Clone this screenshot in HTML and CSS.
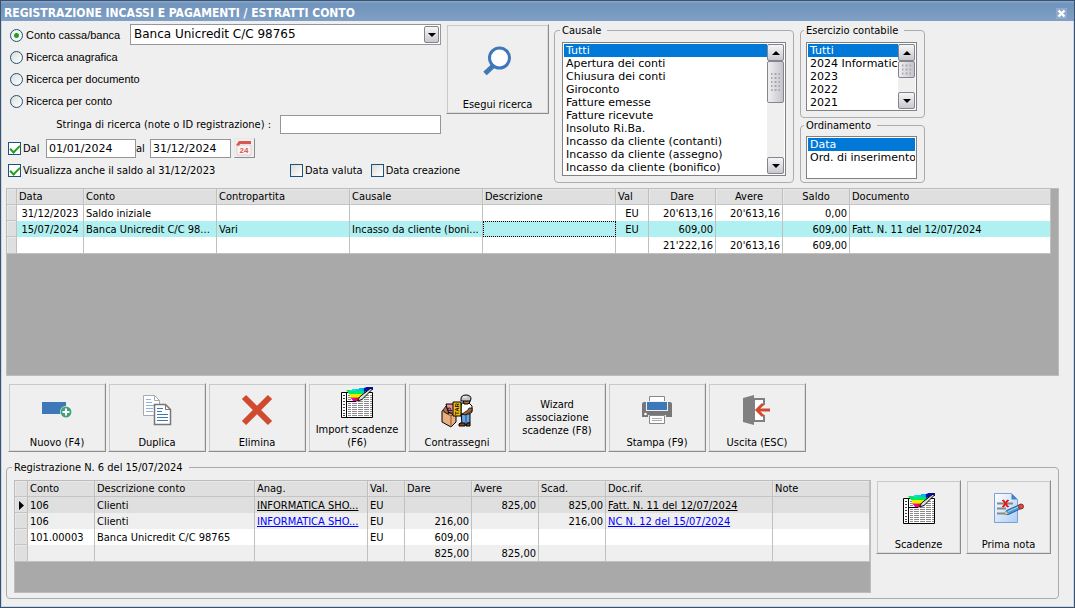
FILE: index.html
```html
<!DOCTYPE html>
<html lang="it">
<head>
  <meta charset="UTF-8">
  <meta name="viewport" content="width=device-width, initial-scale=1.0">
  <title>Registrazione incassi e pagamenti</title>
  <link rel="stylesheet" href="styles.css">
</head>
<body>
<div class="window">
  <header class="titlebar">
    <h1>REGISTRAZIONE INCASSI E PAGAMENTI / ESTRATTI CONTO</h1>
    <button type="button" class="close" aria-label="Chiudi">
      <svg width="11" height="11" viewBox="0 0 11 11"><path d="M2.5 2.5l6 6M8.5 2.5l-6 6" stroke="#fff" stroke-width="2.4"/></svg>
    </button>
  </header>

  <!-- icons used more than once -->
  <svg class="defs" width="0" height="0">
    <defs>
      <linearGradient id="pen" x1="0" x2="1"><stop offset="0" stop-color="#00e040"/><stop offset=".3" stop-color="#00e8e8"/><stop offset=".7" stop-color="#00b0f0"/><stop offset="1" stop-color="#0010a0"/></linearGradient>
    </defs>
    <symbol id="i-sheet" viewBox="0 0 34 34">
      <path d="M1.500 6.500h31v25h-31z" fill="#fff" stroke="#000"/>
      <path d="M3 9.500h2M3 12.500h2M3 15.500h2M3 18.500h2M3 21.500h2M3 24.500h2M3 27.500h2M3 29.500h2" stroke="#444"/>
      <path d="M6.500 7v24" stroke="#000"/>
      <path d="M8 9.500h24M8 11.500h24M8 13.500h24M8 15.500h24M8 17.500h24M8 19.500h24M8 21.500h24M8 23.500h24M8 25.500h24M8 27.500h24M8 29.500h24" stroke="#8a8a8a"/>
      <path d="M11.500 7v24M17.500 7v24M23.500 7v24M29.500 7v24" stroke="#fff"/>
      <path d="M6 4h6V3h7V2h7V1h4l-5 5H8z" fill="url(#pen)"/>
      <path d="M7 5h19l-3 3H9z" fill="#00e860"/>
      <path d="M9 8h14l-3 3H11z" fill="#e8f000"/>
      <path d="M10 11h9l-2 2h-6z" fill="#ff9000"/>
      <path d="M11 12h5v3h-3z" fill="#e000e0"/>
      <path d="M15 12h4l-2 3h-2z" fill="#f01020"/>
      <path d="M6 15.500h10" stroke="#000"/>
      <path d="M24 2l3-1h6v3h-4l-5 2z" fill="#0010b0"/>
      <path d="M17.500 15l2-4L31 2l1.500 1L22 13.500z" fill="#ddd" stroke="#000"/>
    </symbol>
  </svg>

  <form class="search">
    <div class="filters">
      <div class="filter-top">
        <div class="radios">
          <label><input type="radio" name="tipo" checked>Conto cassa/banca</label>
          <label><input type="radio" name="tipo">Ricerca anagrafica</label>
          <label><input type="radio" name="tipo">Ricerca per documento</label>
          <label><input type="radio" name="tipo">Ricerca per conto</label>
        </div>
        <div class="combo">
          <select aria-label="Conto cassa/banca"><option>Banca Unicredit C/C 98765</option></select>
          <span class="sb-btn down"></span>
        </div>
      </div>
      <div class="note-row">
        <label for="note">Stringa di ricerca (note o ID registrazione) :</label>
        <input type="text" id="note">
      </div>
      <div class="date-row">
        <label><input type="checkbox" checked>Dal</label>
        <input type="text" class="from" value="01/01/2024" aria-label="Data iniziale">
        <label for="date-to">al</label>
        <input type="text" id="date-to" value="31/12/2024">
        <button type="button" class="cal" aria-label="Calendario">
          <svg width="18" height="17" viewBox="0 0 18 17">
            <path d="M2 5h14v10H2z" fill="#fdf4f3" stroke="#dcd0d0"/>
            <path d="M1 5l3-4h12v3H5L4 6z" fill="#d9574e"/>
            <text x="9" y="13" text-anchor="middle">24</text>
          </svg>
        </button>
      </div>
      <div class="check-row">
        <label class="balance"><input type="checkbox" checked>Visualizza anche il saldo al 31/12/2023</label>
        <label><input type="checkbox">Data valuta</label>
        <label><input type="checkbox">Data creazione</label>
      </div>
    </div>

    <button type="button" class="btn run">
      <svg width="32" height="32" viewBox="0 0 32 32">
        <path d="M11 21L3 28.500" stroke="#3d78b8" stroke-width="5"/>
        <circle cx="17.500" cy="13" r="10" fill="#fff" stroke="#3d78b8" stroke-width="3"/>
      </svg>
      <span>Esegui ricerca</span>
    </button>

    <fieldset class="group causale">
      <legend>Causale</legend>
      <div class="listbox">
        <select size="10" aria-label="Causale">
          <option selected>Tutti</option>
          <option>Apertura dei conti</option>
          <option>Chiusura dei conti</option>
          <option>Giroconto</option>
          <option>Fatture emesse</option>
          <option>Fatture ricevute</option>
          <option>Insoluto Ri.Ba.</option>
          <option>Incasso da cliente (contanti)</option>
          <option>Incasso da cliente (assegno)</option>
          <option>Incasso da cliente (bonifico)</option>
        </select>
        <div class="scroll"><span class="sb-btn up"></span><span class="thumb"></span><span class="sb-btn down"></span></div>
      </div>
    </fieldset>

    <div class="side">
      <fieldset class="group esercizio">
        <legend>Esercizio contabile</legend>
        <div class="listbox">
          <select size="5" aria-label="Esercizio contabile">
            <option selected>Tutti</option>
            <option>2024 Informatica</option>
            <option>2023</option>
            <option>2022</option>
            <option>2021</option>
          </select>
          <div class="scroll"><span class="sb-btn up"></span><span class="thumb"></span><span class="sb-btn down"></span></div>
        </div>
      </fieldset>
      <fieldset class="group ordine">
        <legend>Ordinamento</legend>
        <div class="listbox">
          <select size="3" aria-label="Ordinamento">
            <option selected>Data</option>
            <option>Ord. di inserimento</option>
          </select>
        </div>
      </fieldset>
    </div>
  </form>

  <div class="grid main-grid">
    <table>
      <colgroup>
        <col class="w-sel"><col class="w-num"><col class="w-text"><col class="w-text"><col class="w-text"><col class="w-text"><col class="w-val"><col class="w-num"><col class="w-num"><col class="w-num"><col>
      </colgroup>
      <thead>
        <tr><th></th><th>Data</th><th>Conto</th><th>Contropartita</th><th>Causale</th><th>Descrizione</th><th>Val</th><th class="c">Dare</th><th class="c">Avere</th><th class="c">Saldo</th><th>Documento</th></tr>
      </thead>
      <tbody>
        <tr><th></th><td class="c">31/12/2023</td><td>Saldo iniziale</td><td></td><td></td><td></td><td class="c">EU</td><td class="r">20'613,16</td><td class="r">20'613,16</td><td class="r">0,00</td><td></td></tr>
        <tr class="current"><th></th><td class="c">15/07/2024</td><td>Banca Unicredit C/C 98...</td><td>Vari</td><td>Incasso da cliente (boni...</td><td class="focus"></td><td class="c">EU</td><td class="r">609,00</td><td class="r"></td><td class="r">609,00</td><td>Fatt. N. 11 del 12/07/2024</td></tr>
        <tr><th></th><td></td><td></td><td></td><td></td><td></td><td></td><td class="r">21'222,16</td><td class="r">20'613,16</td><td class="r">609,00</td><td></td></tr>
      </tbody>
    </table>
  </div>

  <nav class="toolbar">
    <button type="button" class="btn">
      <svg width="32" height="32" viewBox="0 0 32 32">
        <path d="M1 8h24v12H1z" fill="#3d78b8"/>
        <circle cx="25" cy="18" r="6" fill="#fff"/><circle cx="25" cy="18" r="5.500" fill="#44a077"/>
        <path d="M25 14.500v7M21.500 18h7" stroke="#fff" stroke-width="2"/>
      </svg>
      <span>Nuovo (F4)</span>
    </button>
    <button type="button" class="btn">
      <svg width="32" height="32" viewBox="0 0 32 32">
        <path d="M2.500 1.500h11l5 5v15h-16z" fill="#fff" stroke="#aaa"/><path d="M13.500 1.500v5h5" fill="none" stroke="#aaa"/>
        <path d="M5 5.500h5M5 8.500h6M5 11.500h8M5 14.500h7M5 17.500h7" stroke="#8bb4de"/>
        <path d="M13.500 10.500h11l5 5v15h-16z" fill="#fff" stroke="#777" stroke-width="1.500"/><path d="M24.500 10.500v5h5" fill="none" stroke="#777"/>
        <path d="M16 14.500h6M16 17.500h5M16 20.500h11M16 23.500h11M16 26.500h11" stroke="#3d78b8"/>
      </svg>
      <span>Duplica</span>
    </button>
    <button type="button" class="btn">
      <svg width="32" height="32" viewBox="0 0 32 32"><path d="M3 3l26 26M29 3l-26 26" stroke="#d04a30" stroke-width="6"/></svg>
      <span>Elimina</span>
    </button>
    <button type="button" class="btn two">
      <svg width="34" height="34"><use href="#i-sheet"/></svg>
      <span>Import scadenze (F6)</span>
    </button>
    <button type="button" class="btn">
      <svg width="32" height="34" viewBox="0 0 32 34">
        <path d="M20 17h9v12h-2v2h-6z" fill="#6aa5e0" stroke="#000"/>
        <path d="M25 19v10" stroke="#1d4f90"/>
        <path d="M19 29h5v3h-6v-2zM26 29h3v3h-4z" fill="#7a4420" stroke="#000"/>
        <path d="M21 9h7l3 3v6l-3 2h-8v-8z" fill="#fff" stroke="#000"/>
        <path d="M22 5h7v3l-2 2h-4z" fill="#b0703c" stroke="#000"/>
        <path d="M20 5q0-4 5-4t5 4l-1 2h-9z" fill="#c4c4c4" stroke="#000"/>
        <path d="M22 3h4" stroke="#fff"/>
        <path d="M28 14h3v3l-7 4-3-1 6-4z" fill="#a86432" stroke="#000" stroke-width=".7"/>
        <path d="M1 17l5-3 9 3v11l-5 5-9-5z" fill="#e8b080" stroke="#000"/>
        <path d="M1 17l9 5v11M10 22l5-5" fill="none" stroke="#8a5028"/>
        <path d="M5 10h8v11l-6-3z" fill="#f09098" stroke="#000"/>
        <path d="M2 16l3-4 3 8-3-1z" fill="#a87050" stroke="#000" stroke-width=".7"/>
        <path d="M12 8h8v14h-8z" fill="#f8c010" stroke="#000"/>
        <text class="tag" transform="translate(18 21) rotate(-90)">TAR</text>
        <text class="tag" transform="translate(11 19) rotate(-90)">IP</text>
      </svg>
      <span>Contrassegni</span>
    </button>
    <button type="button" class="btn text-only"><span>Wizard associazione scadenze (F8)</span></button>
    <button type="button" class="btn">
      <svg width="32" height="32" viewBox="0 0 32 32">
        <path d="M8.500 2.500h15v8h-15z" fill="#fff" stroke="#888"/>
        <path d="M1 10q0-2 2-2h26q2 0 2 2v13H1z" fill="#777"/>
        <path d="M5 7h22v10H5z" fill="#efefef"/><path d="M6 8h20v8H6z" fill="#3d78b8"/>
        <circle cx="4.500" cy="20" r="1.300" fill="#fff"/>
        <path d="M7 21h18v3H7z" fill="#efefef"/>
        <path d="M8.500 21.500h15v8h-15z" fill="#fff" stroke="#888"/>
        <path d="M11 24.500h10M11 26.500h10" stroke="#aaa"/>
      </svg>
      <span>Stampa (F9)</span>
    </button>
    <button type="button" class="btn">
      <svg width="32" height="32" viewBox="0 0 32 32">
        <path d="M13 5h10v22H13z" fill="#fff" stroke="#808080" stroke-width="2"/>
        <path d="M21 11h6v10h-6z" fill="#efefef"/><path d="M19 10h3v12h-3z" fill="#fff"/>
        <path d="M2 4l11-3v30L2 28z" fill="#808080"/>
        <path d="M16 16h13" stroke="#d04a30" stroke-width="3"/><path d="M22 10l-6 6 6 6" fill="none" stroke="#d04a30" stroke-width="3"/>
      </svg>
      <span>Uscita (ESC)</span>
    </button>
  </nav>

  <fieldset class="group detail">
    <legend>Registrazione N. 6 del 15/07/2024</legend>
    <div class="grid detail-grid">
      <table>
        <colgroup>
          <col class="w-mark"><col class="w-num"><col class="w-desc"><col class="w-anag"><col class="w-cur"><col class="w-num"><col class="w-num"><col class="w-num"><col class="w-doc"><col>
        </colgroup>
        <thead>
          <tr><th></th><th>Conto</th><th>Descrizione conto</th><th>Anag.</th><th>Val.</th><th>Dare</th><th>Avere</th><th>Scad.</th><th>Doc.rif.</th><th>Note</th></tr>
        </thead>
        <tbody>
          <tr class="picked"><th><svg class="marker" width="5" height="9" viewBox="0 0 5 9"><path d="M0 0l5 4.500L0 9z"/></svg></th><td>106</td><td>Clienti</td><td><a href="#">INFORMATICA SHO...</a></td><td>EU</td><td></td><td class="r">825,00</td><td class="r">825,00</td><td><a href="#">Fatt. N. 11 del 12/07/2024</a></td><td></td></tr>
          <tr class="alt"><th></th><td>106</td><td>Clienti</td><td><a href="#">INFORMATICA SHO...</a></td><td>EU</td><td class="r">216,00</td><td></td><td class="r">216,00</td><td><a href="#">NC N. 12 del 15/07/2024</a></td><td></td></tr>
          <tr><th></th><td>101.00003</td><td>Banca Unicredit C/C 98765</td><td></td><td>EU</td><td class="r">609,00</td><td></td><td></td><td></td><td></td></tr>
          <tr class="alt"><th></th><td></td><td></td><td></td><td></td><td class="r">825,00</td><td class="r">825,00</td><td></td><td></td><td></td></tr>
        </tbody>
      </table>
    </div>
    <div class="detail-actions">
      <button type="button" class="btn">
        <svg width="34" height="34"><use href="#i-sheet"/></svg>
        <span>Scadenze</span>
      </button>
      <button type="button" class="btn">
        <svg width="32" height="34" viewBox="0 0 32 34">
          <defs><linearGradient id="page" x1="0" y1="0" x2="1" y2="1"><stop offset="0" stop-color="#fff"/><stop offset="1" stop-color="#a9cdf5"/></linearGradient></defs>
          <path d="M1.500 1.500h17l6 6v23h-23z" fill="url(#page)" stroke="#7e9fd0"/>
          <path d="M18.500 1.500l6 6h-6z" fill="#3c83c8"/>
          <path d="M4 11.500h16M4 16.500h9M4 21.500h8" stroke="#888" stroke-width="2"/>
          <path d="M10 8l5 7M15 8l-5 7" stroke="#e81818" stroke-width="2"/><path d="M9 8.500h2M14 8.500h2M9 14.500h2M14 14.500h2" stroke="#e81818"/>
          <path d="M11.500 22.500l2-4L26 13l2 3.500-12.500 6z" fill="#4e9ad4" stroke="#245e94"/>
          <path d="M15 19.500l11-5" stroke="#a8d8f4"/>
          <path d="M11 23l2-4 2 3z" fill="#f0c890"/>
          <circle cx="28" cy="14.500" r="2.500" fill="#d84c40" stroke="#8c3030"/>
        </svg>
        <span>Prima nota</span>
      </button>
    </div>
  </fieldset>
</div>
</body>
</html>
```

FILE: styles.css
```css
* { box-sizing: border-box; }
body { margin: 0; background: #efefef; color: #000; font: 11px/13px "DejaVu Sans Condensed", Tahoma, sans-serif; }
input, select, button { font: inherit; color: inherit; margin: 0; }
button { padding: 0; cursor: pointer; }

.window { min-height: 100vh; border: 1px solid #3b526e; background: #efefef; box-shadow: inset 1px 0 #c9d5e3, inset -1px -1px #c9d5e3; }
.titlebar { display: flex; align-items: center; justify-content: space-between; height: 20px; padding: 4px 7px 0 3px; background: linear-gradient(#8aa9cc, #6f93bb 3px, #80a0c6); }
.titlebar h1 { margin: 0; color: #fff; font-size: 12px; font-weight: bold; }
.close { display: flex; width: 11px; height: 11px; border: 0; background: #90abca; }
.defs { position: absolute; }

/* search panel */
.search { display: flex; align-items: flex-start; gap: 5px; padding: 3px 7px 0; }
.filters { flex: none; width: 433px; }
.filter-top { display: flex; justify-content: space-between; height: 90px; }
.radios { display: flex; flex-direction: column; width: 0; padding-left: 2px; font-family: "Liberation Sans", Arial, sans-serif; }
.radios label { display: flex; align-items: center; gap: 3px; height: 22px; }
.filters label { white-space: nowrap; }
.combo { display: flex; flex: none; align-items: center; width: 311px; height: 21px; padding-right: 1px; border: 1px solid #969696; background: #fff; }
.combo select { flex: 1; appearance: none; border: 0; padding: 0 3px; background: none; font: 12px/17px "DejaVu Sans", Verdana, sans-serif; outline: 0; }
.combo .sb-btn { width: 15px; }

input[type="radio"], input[type="checkbox"] { appearance: none; flex: none; width: 13px; height: 13px; border: 1px solid #1d5180; background: linear-gradient(135deg, #dcdcd7, #fff); }
input[type="radio"] { border-radius: 50%; }
input[type="radio"]:checked { background: radial-gradient(circle, #21a121 2px, #f4f4f2 3px); }
input[type="checkbox"]:checked { background: #fff; }
input[type="checkbox"]:checked::before { content: ""; display: block; width: 8px; height: 4px; margin: 2px 1px; border: solid #21a121; border-width: 0 0 2px 2px; transform: rotate(-45deg); }
input[type="text"] { height: 19px; padding: 0 2px; border: 1px solid #969696; background: #fff; outline: 0; font: 11px/15px "DejaVu Sans", Verdana, sans-serif; }

.note-row { display: flex; align-items: center; justify-content: flex-end; gap: 9px; height: 21px; }
.note-row input { width: 161px; }
.date-row { display: flex; align-items: center; margin-top: 3px; height: 20px; }
.date-row label, .check-row label { display: flex; flex: none; align-items: center; gap: 2px; }
.date-row label:first-child { width: 38px; }
.date-row .from { width: 90px; }
.date-row label[for] { width: 14px; }
.date-row #date-to { width: 81px; }
.cal { margin-left: 3px; width: 21px; height: 20px; border: 1px solid; border-color: #e8e8e8 #8c8c8c #8c8c8c #e8e8e8; background: #efefef; }
.cal svg { display: block; }
.cal text { fill: #d9574e; font: bold 8px "Liberation Sans", Arial, sans-serif; }
.check-row { display: flex; align-items: center; gap: 8px; margin-top: 6px; }
.check-row .balance { width: 274px; }

/* raised buttons */
.btn { display: flex; flex: none; flex-direction: column; align-items: center; justify-content: space-between; width: 98px; height: 69px; padding: 10px 3px 2px; border: 1px solid; border-color: #efefef #8c8c8c #8c8c8c #efefef; background: #efefef; box-shadow: inset 1px 1px #c9c9cc, inset -1px -1px #dcdcdc; text-align: center; }
.btn svg { flex: none; }
.btn.two { padding-top: 2px; }
.btn.text-only { justify-content: center; padding: 0 10px; }
.tag { font: bold 6px "Liberation Sans", Arial, sans-serif; }
.btn.run { width: 103px; height: 90px; padding-top: 20px; }

/* group boxes and lists */
.group { min-width: 0; margin: 0; border: 1px solid #acacac; border-radius: 4px; padding: 0 7px; }
.group legend { padding: 0 6px 0 2px; margin-left: -2px; }
.causale { flex: none; width: 240px; height: 159px; }
.side { display: flex; flex: none; flex-direction: column; gap: 1px; width: 125px; margin-left: 1px; }
.esercizio { height: 94px; }
.ordine { height: 64px; }
.side .group { padding: 0 7px 0 5px; }
.listbox { display: flex; border: 1px solid #828282; padding: 1px; background: #fff; overflow: hidden; }
.causale .listbox { height: 134px; margin-top: 5px; }
.esercizio .listbox { height: 69px; margin-top: 5px; }
.ordine .listbox { height: 43px; margin-top: 4px; }
.listbox select { flex: 1; min-width: 0; height: 100%; padding: 0; border: 0; border-radius: 0; outline: 0; background: #fff; overflow: hidden; scrollbar-width: none; font: 11px/13px "DejaVu Sans", Verdana, sans-serif; }
.listbox option { min-height: 13px; height: 13px; padding: 0 2px; line-height: 13px; }
.listbox option:checked { background: #0078d7 linear-gradient(#0078d7, #0078d7); color: #fff; -webkit-text-fill-color: #fff; }
.scroll { display: flex; flex-direction: column; flex: none; width: 17px; background: #efefef; }
.scroll .down { margin-top: auto; }
.sb-btn { display: flex; align-items: center; justify-content: center; flex: none; height: 17px; border: 1px solid #84848c; border-radius: 2px; background: linear-gradient(#f6f6f8, #c8c8d0); }
.sb-btn::before { content: ""; border: 4px solid transparent; border-top-width: 0; border-bottom: 4px solid #000; }
.sb-btn.down::before { border-width: 4px 4px 0; border-top-color: #000; }
.thumb { height: 42px; border: 1px solid #84848c; border-radius: 2px; background: radial-gradient(circle, #aaa 1px, transparent 1px) center / 4px 4px content-box, linear-gradient(90deg, #eeeef2, #c4c4cc); padding: 9px 3px; }
.esercizio .thumb { height: 17px; padding: 1px 3px; }

/* data grids */
.grid { background: #a9a9a9; border: 1px solid #bcbcbc; overflow: hidden; }
.grid table { width: 100%; table-layout: fixed; border-collapse: separate; border-spacing: 0; }
.grid th, .grid td { height: 16px; padding: 1px 2px 0; overflow: hidden; white-space: nowrap; text-align: left; font-weight: normal; line-height: 14px; border-right: 1px solid #c0c0c0; }
.grid td { background: #fff; }
.grid th { background: #dfdfdf; border-bottom: 1px solid #c4c4c4; box-shadow: inset 1px 1px #e8e8e8; }
.grid tbody tr:last-child > * { border-bottom: 1px solid #c0c0c0; }
.grid td:not(:empty) { padding-top: 2px; }
.grid .c { text-align: center; }
.grid .r { text-align: right; }
.grid .current td { background: #b0f0f0; }
.grid .current .focus { outline: 1px dotted #000; outline-offset: -1px; }
.grid .alt td { background: #efefef; }
.grid .picked td { background: #dfdfdf; }
.grid a { color: #00f; }
.grid .picked a { color: #000; }
.w-sel { width: 10px; }
.w-mark { width: 13px; }
.w-num { width: 67px; }
.w-text { width: 133px; }
.w-val { width: 33px; }
.w-desc { width: 160px; }
.w-anag { width: 113px; }
.w-cur { width: 37px; }
.w-doc { width: 167px; }
.main-grid { height: 188px; margin: 5px 15px 0 5px; padding-right: 7px; }
.marker { display: block; margin: 0 auto; }

.toolbar { display: flex; gap: 2px; padding: 7px 7px 0; }

.detail { display: flex; align-items: flex-start; gap: 5px; margin: 9px 15px 8px 5px; padding: 6px 7px 5px; }
.detail-grid { flex: 1; height: 113px; }
.detail-actions { display: flex; gap: 5px; }
.detail-actions .btn { width: 85px; height: 74px; padding-top: 11px; }
```
